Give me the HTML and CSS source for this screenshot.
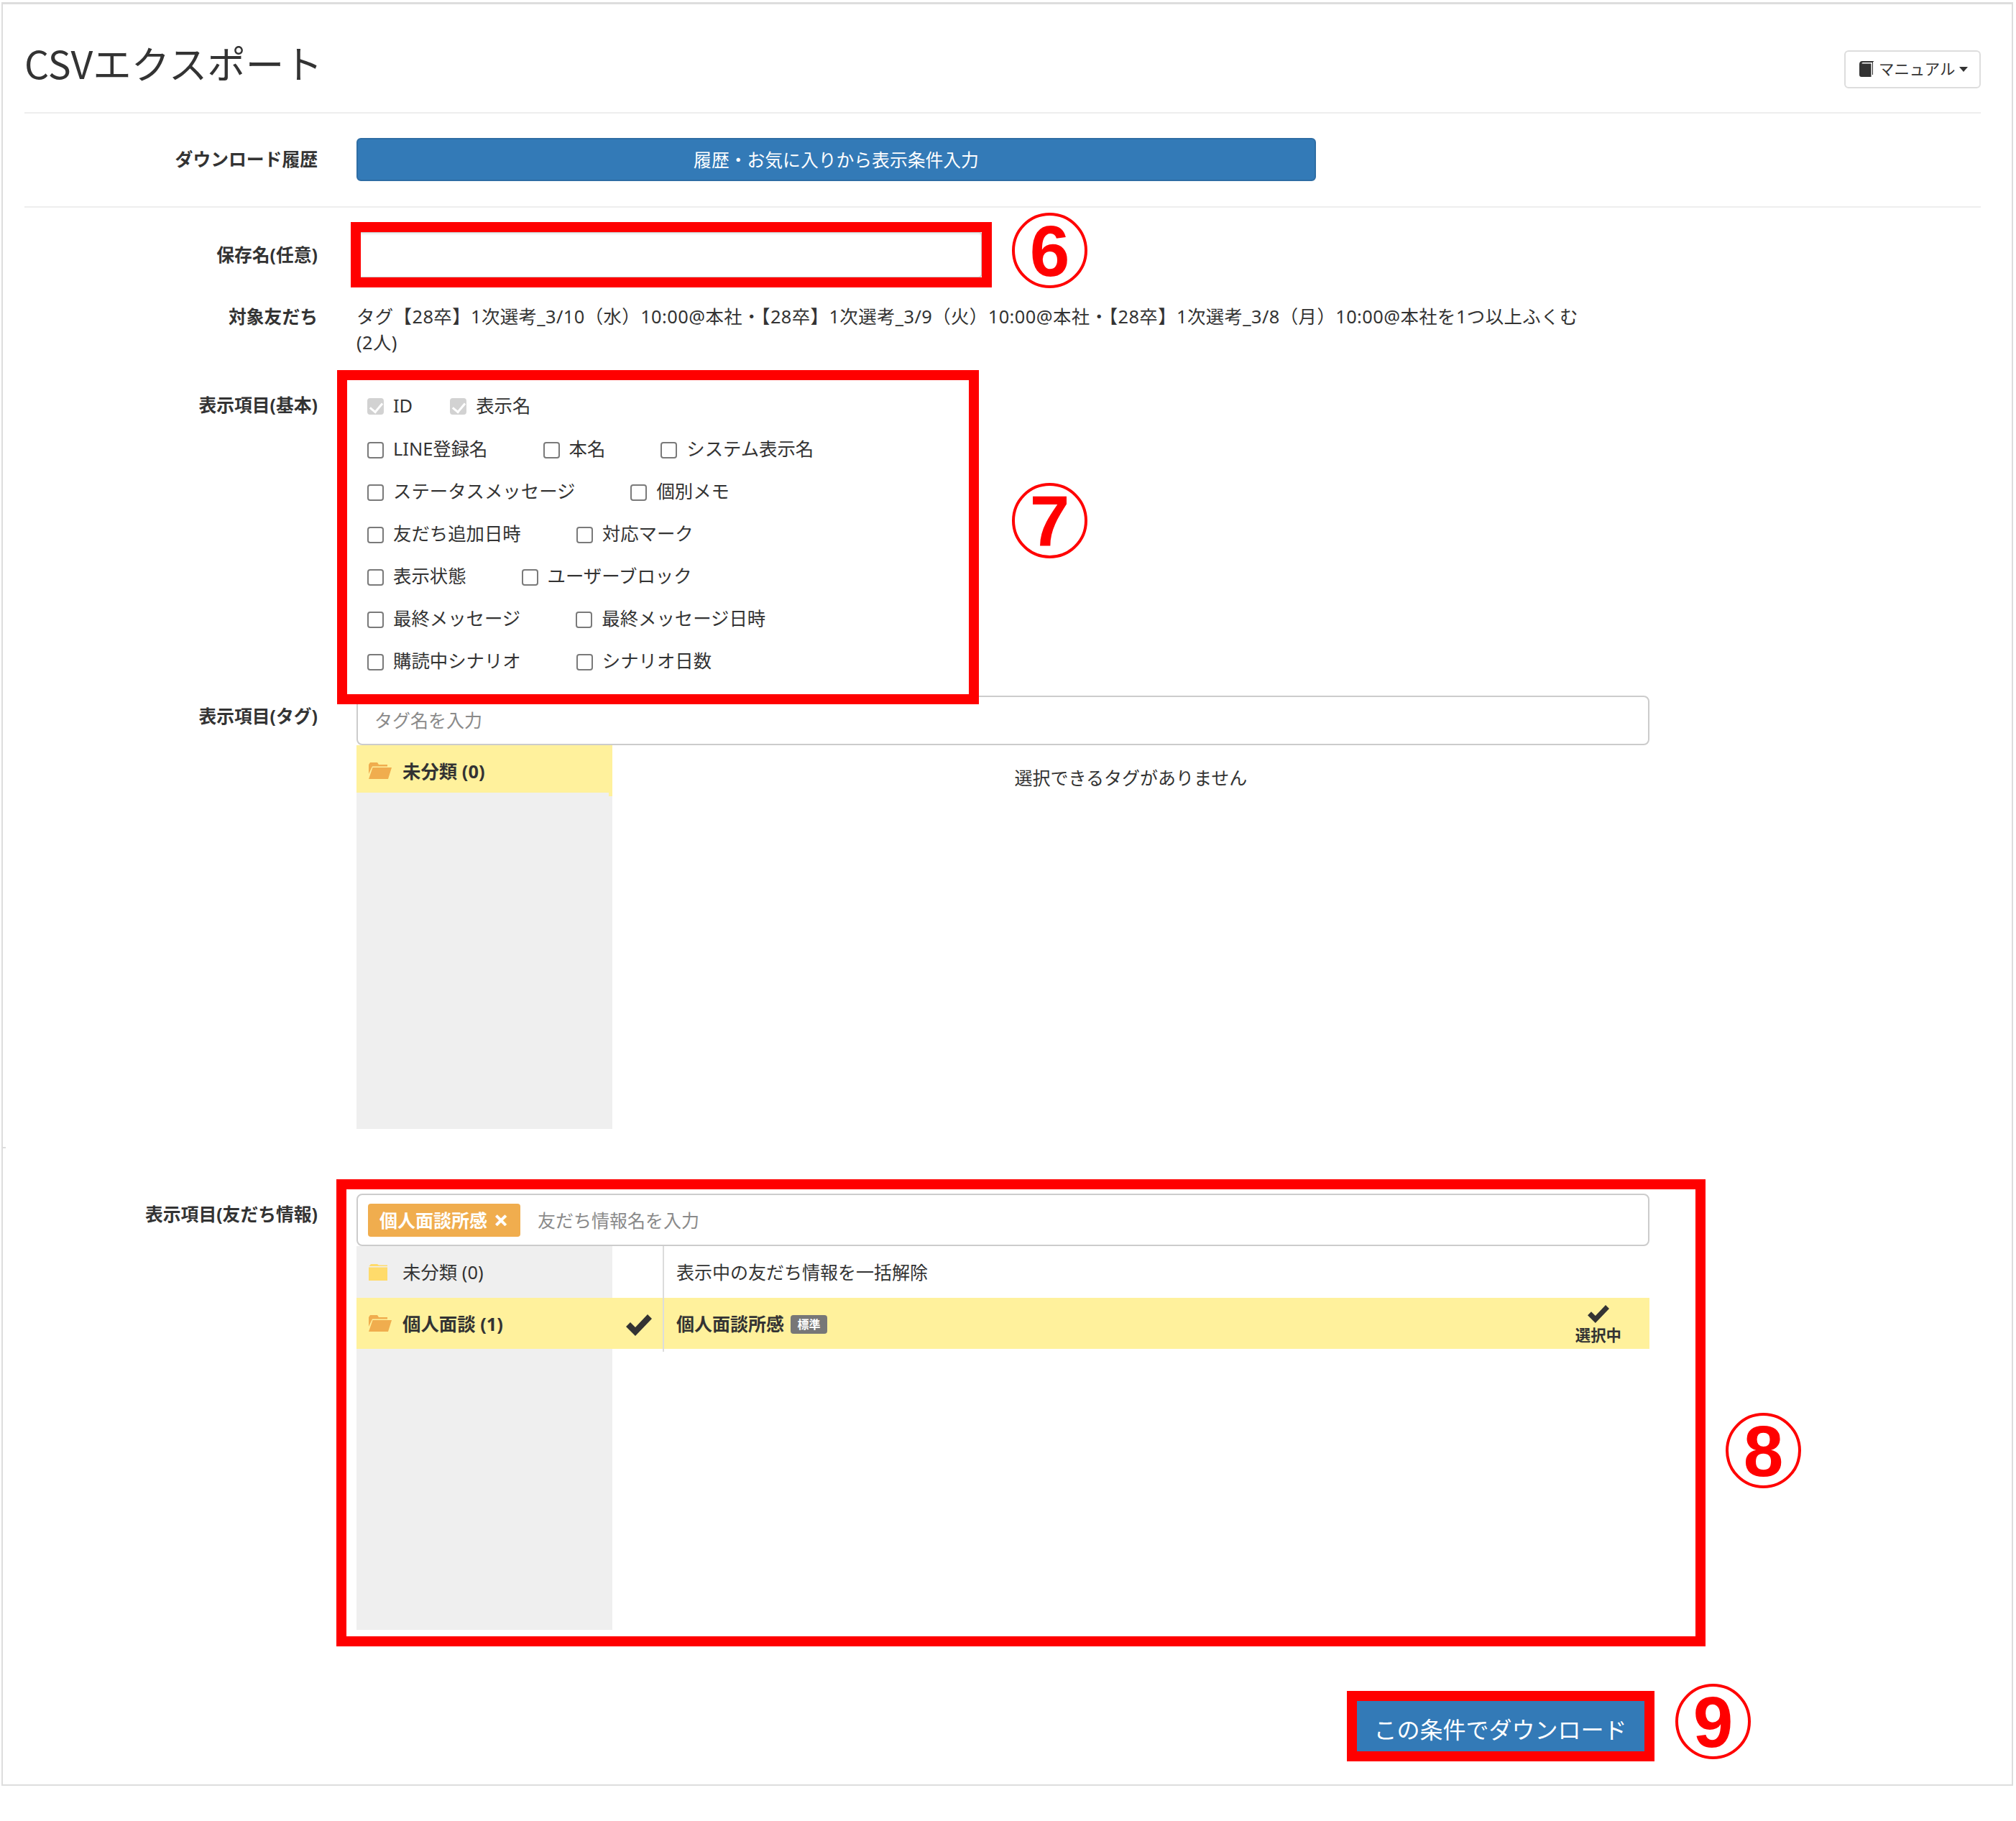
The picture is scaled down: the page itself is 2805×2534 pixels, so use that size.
FILE: index.html
```html
<!DOCTYPE html>
<html lang="ja">
<head>
<meta charset="utf-8">
<title>CSVエクスポート</title>
<link rel="stylesheet" href="styles.css">
</head>
<body>
<main class="panel">
  <header class="page-head">
    <h1 class="page-title">CSVエクスポート</h1>
    <button class="manual-btn" type="button">
      <svg class="book-icon" viewBox="0 0 20 22"><path d="M0 4.5C0 1.5 1.5 0 4 0H20V1H19V19H18V2H5C3.8 2 3.4 3 3.6 3.6H16.5V22H3C1 22 0 20.8 0 19Z"/></svg>
      <span>マニュアル</span>
      <span class="caret"></span>
    </button>
  </header>

  <section class="row row-history">
    <div class="label label-tall">ダウンロード履歴</div>
    <button class="history-btn" type="button">履歴・お気に入りから表示条件入力</button>
  </section>

  <section class="row row-save">
    <div class="label label-save">保存名(任意)</div>
    <input class="save-input" type="text">
  </section>

  <section class="row row-target">
    <div class="label">対象友だち</div>
    <div class="target-text">タグ【28卒】1次選考_3/10（水）10:00@本社・【28卒】1次選考_3/9（火）10:00@本社・【28卒】1次選考_3/8（月）10:00@本社を1つ以上ふくむ<br>(2人)</div>
  </section>

  <section class="row row-basic">
    <div class="label label-basic">表示項目(基本)</div>
    <div class="checks">
      <div class="check-row check-row-first">
        <label class="check"><input type="checkbox" checked disabled>ID</label>
        <label class="check"><input type="checkbox" checked disabled>表示名</label>
      </div>
      <div class="check-row">
        <label class="check"><input type="checkbox">LINE登録名</label>
        <label class="check"><input type="checkbox">本名</label>
        <label class="check"><input type="checkbox">システム表示名</label>
      </div>
      <div class="check-row">
        <label class="check"><input type="checkbox">ステータスメッセージ</label>
        <label class="check"><input type="checkbox">個別メモ</label>
      </div>
      <div class="check-row">
        <label class="check"><input type="checkbox">友だち追加日時</label>
        <label class="check"><input type="checkbox">対応マーク</label>
      </div>
      <div class="check-row">
        <label class="check"><input type="checkbox">表示状態</label>
        <label class="check"><input type="checkbox">ユーザーブロック</label>
      </div>
      <div class="check-row">
        <label class="check"><input type="checkbox">最終メッセージ</label>
        <label class="check"><input type="checkbox">最終メッセージ日時</label>
      </div>
      <div class="check-row">
        <label class="check"><input type="checkbox">購読中シナリオ</label>
        <label class="check"><input type="checkbox">シナリオ日数</label>
      </div>
    </div>
  </section>

  <section class="row row-tag">
    <div class="label label-tag">表示項目(タグ)</div>
    <div class="picker">
      <div class="picker-input picker-input-short"><input type="text" placeholder="タグ名を入力"></div>
      <div class="picker-body">
        <div class="folders">
          <div class="folder folder-on folder-tag">
            <svg class="folder-open" viewBox="0 0 32 23"><path d="M0 16V3L2 0H12L14 3H26V5.500H5Z"/><path d="M5.500 7H32L27 23H0Z"/></svg>
            <span>未分類 (0)</span>
          </div>
        </div>
        <div class="empty-msg">選択できるタグがありません</div>
      </div>
    </div>
  </section>

  <section class="row row-friend">
    <div class="label label-friend">表示項目(友だち情報)</div>
    <div class="picker">
      <div class="picker-input picker-input-tagged">
        <span class="chip">個人面談所感<span class="chip-x">×</span></span>
        <input type="text" placeholder="友だち情報名を入力">
      </div>
      <div class="picker-body">
        <div class="folders">
          <div class="folder">
            <svg class="folder-closed" viewBox="0 0 26 23"><path d="M1 2.500L3 0H12L14 1.500H26V3H0Z"/><path d="M0 4.500H26V23H0Z"/></svg>
            <span>未分類 (0)</span>
          </div>
          <div class="folder folder-on folder-wide">
            <svg class="folder-open" viewBox="0 0 32 23"><path d="M0 16V3L2 0H12L14 3H26V5.500H5Z"/><path d="M5.500 7H32L27 23H0Z"/></svg>
            <span>個人面談 (1)</span>
            <svg class="check-icon" viewBox="0 0 36 30"><path d="M0 17L6 11L13 18L30 0L36 6L13 30Z"/></svg>
          </div>
        </div>
        <div class="values">
          <div class="value">表示中の友だち情報を一括解除</div>
          <div class="value value-on">
            <span>個人面談所感</span><span class="badge">標準</span>
            <span class="selected">
              <svg class="selected-check" viewBox="0 0 36 30"><path d="M0 17L6 11L13 18L30 0L36 6L13 30Z"/></svg>
              <span class="selected-text">選択中</span>
            </span>
          </div>
        </div>
      </div>
    </div>
  </section>

  <div class="submit-row">
    <button class="submit-btn" type="button">この条件でダウンロード</button>
  </div>
</main>

<div class="mark-box mark-box-6"></div>
<div class="mark-num mark-num-6">6</div>
<div class="mark-box mark-box-7"></div>
<div class="mark-num mark-num-7">7</div>
<div class="mark-box mark-box-8"></div>
<div class="mark-num mark-num-8">8</div>
<div class="mark-box mark-box-9"></div>
<div class="mark-num mark-num-9">9</div>
</body>
</html>
```
FILE: styles.css
```css
* { box-sizing: border-box; }
html, body { margin: 0; background: #fff; }
body {
  position: relative;
  min-height: 2534px;
  font-family: "Noto Sans", "Noto Sans CJK JP", sans-serif;
  font-size: 25.400px;
  line-height: 36px;
  color: #333;
}
button, input { font-family: inherit; }

.panel {
  position: relative;
  width: 2799px;
  margin: 3px 0 0 2px;
  padding: 0 43px 40px 30px;
  border: 2px solid #ddd;
  border-top-width: 3px;
}
.panel::before {
  content: "";
  position: absolute;
  left: 0;
  top: 1590px;
  width: 4px;
  height: 2px;
  background: #ddd;
}

.page-head {
  display: flex;
  justify-content: space-between;
  align-items: flex-start;
  height: 152px;
  padding-top: 51px;
  border-bottom: 2px solid #eee;
}
.page-title {
  margin: 0;
  font-family: "Noto Sans CJK JP", sans-serif;
  font-size: 53.500px;
  font-weight: 400;
  line-height: 59px;
}
.manual-btn {
  display: flex;
  align-items: center;
  width: 190px;
  height: 53px;
  margin-top: 13px;
  padding: 0 0 4px 19px;
  background: #fff;
  border: 2px solid #ddd;
  border-radius: 6px;
  color: #333;
  font-size: 21.400px;
  white-space: nowrap;
}
.book-icon { width: 20px; height: 22px; margin: 2px 7px 0 0; fill: #333; }
.caret {
  width: 0;
  height: 0;
  margin: 3px 0 0 6px;
  border-top: 7px solid #333;
  border-left: 6.500px solid transparent;
  border-right: 6.500px solid transparent;
}

.row { display: flex; align-items: flex-start; }
.label {
  flex: none;
  width: 408px;
  margin-right: 54px;
  font-size: 24.800px;
  text-align: right;
  font-weight: 700;
}

.row-history { padding: 34px 0 35px; border-bottom: 2px solid #eee; }
.label-tall { line-height: 58px; }
.history-btn {
  width: 1335px;
  height: 60px;
  padding: 0 0 3px;
  background: #337ab7;
  border: 2px solid #2e6da4;
  border-radius: 6px;
  color: #fff;
  font-size: 24.800px;
}

.row-save { padding-top: 33px; }
.label-save { line-height: 64px; }
.save-input {
  width: 871px;
  height: 65px;
  background: #fff;
  border: 2px solid #ccc;
  border-radius: 6px;
  box-shadow: inset 0 2px 2px rgba(0, 0, 0, .075);
}

.row-target { margin-top: 35px; }
.target-text { letter-spacing: .42px; white-space: nowrap; }

.row-basic { margin-top: 41px; }
.label-basic { padding-top: 10px; }
.check-row { display: flex; align-items: center; height: 59px; padding: 1px 0 0 15px; }
.check-row-first { padding-top: 0; padding-bottom: 2px; }
.check {
  display: flex;
  align-items: center;
  margin-right: 77px;
  white-space: nowrap;
}
.check-row-first .check { margin-right: 52px; }
.check input {
  position: relative;
  appearance: none;
  flex: none;
  width: 23px;
  height: 23px;
  margin: 4px 13px 0 0;
  background: #fff;
  border: 2px solid #7a7a7a;
  border-radius: 4px;
}
.check input:disabled { background: #d2d2d2; border-color: #d2d2d2; }
.check input:checked::after {
  content: "";
  position: absolute;
  left: 5px;
  top: 1px;
  width: 8px;
  height: 14px;
  border-right: 3px solid #fff;
  border-bottom: 3px solid #fff;
  transform: rotate(40deg);
}

.row-tag { margin-top: 20px; }
.label-tag { padding-top: 10px; }
.row-friend { margin-top: 90px; }
.label-friend { padding-top: 10px; }

.picker { width: 1799px; }
.picker-input {
  display: flex;
  align-items: center;
  height: 73px;
  padding-left: 23px;
  background: #fff;
  border: 2px solid #ccc;
  border-radius: 8px;
}
.picker-input-short { height: 69px; padding-bottom: 1px; }
.picker-input input {
  flex: 1;
  min-width: 0;
  padding: 0;
  border: 0;
  outline: 0;
  background: transparent;
  color: #333;
  font-size: 25px;
}
.picker-input input::placeholder { color: #8a8a8a; opacity: 1; }
.picker-input-tagged { padding-left: 14px; }
.chip {
  display: flex;
  align-items: center;
  flex: none;
  width: 212px;
  height: 46px;
  margin-right: 24px;
  padding-left: 16px;
  background: #f0ad4e;
  border-radius: 4px;
  color: #fff;
  font-size: 25px;
  font-weight: 700;
  white-space: nowrap;
}
.chip-x { margin-left: 9px; font-size: 36px; }

.picker-body { display: flex; align-items: flex-start; height: 534px; }
.folders { flex: none; width: 356px; height: 534px; background: #efefef; }
.folder {
  display: flex;
  align-items: center;
  height: 72px;
  padding-left: 17px;
}
.folder span { margin-left: 15px; }
.folder-on { background: #fff19c; font-weight: 700; }
.folder-tag { position: relative; height: 66px; padding-top: 5px; }
.folder-tag::after {
  content: "";
  position: absolute;
  right: 0;
  top: 100%;
  width: 5px;
  height: 5px;
  background: #fff19c;
}
.folder-wide { position: relative; width: 426px; height: 71px; }
.folder-open { flex: none; width: 32px; height: 23px; fill: #f0ad4e; }
.folder-closed { flex: none; width: 26px; height: 23px; margin-right: 6px; fill: #ffdb6b; }
.check-icon { position: absolute; left: 375px; top: 23px; width: 36px; height: 30px; fill: #333; }

.empty-msg { flex: 1; padding-top: 27px; font-size: 25px; text-align: center; }

.values {
  flex: 1;
  margin-left: 70px;
  padding-bottom: 4px;
  border-left: 2px solid #dcdcdc;
  font-size: 25px;
}
.value {
  display: flex;
  align-items: center;
  height: 72px;
  padding-left: 17px;
}
.value-on { height: 71px; background: #fff19c; font-weight: 700; }
.badge {
  display: flex;
  align-items: center;
  justify-content: center;
  width: 51px;
  height: 26px;
  margin: 3px 0 0 9px;
  background: #777;
  border-radius: 4px;
  color: #fff;
  font-size: 16px;
}
.selected {
  display: flex;
  flex-direction: column;
  align-items: center;
  margin: 5px 39px 0 auto;
}
.selected-check { width: 30px; height: 25px; margin-bottom: 2px; fill: #333; }
.selected-text { font-size: 21.400px; line-height: 30px; }

.submit-row { display: flex; justify-content: flex-end; margin: 93px 462px 0 0; }
.submit-btn {
  width: 413px;
  height: 82px;
  padding-top: 6px;
  background: #337ab7;
  border: 2px solid #2e6da4;
  border-radius: 8px;
  color: #fff;
  font-size: 32px;
  white-space: nowrap;
}

.mark-box { position: absolute; border: 14px solid #f00; }
.mark-box-6 { left: 488px; top: 309px; width: 892px; height: 91px; }
.mark-box-7 { left: 469px; top: 515px; width: 893px; height: 465px; }
.mark-box-8 { left: 468px; top: 1641px; width: 1905px; height: 650px; }
.mark-box-9 { left: 1874px; top: 2353px; width: 428px; height: 98px; }

.mark-num {
  position: absolute;
  display: flex;
  align-items: center;
  justify-content: center;
  width: 105px;
  height: 105px;
  background: transparent;
  border: 4px solid #f00;
  border-radius: 50%;
  color: #f00;
  font-family: "Liberation Sans", sans-serif;
  font-size: 100px;
  font-weight: 700;
  line-height: 1;
}
.mark-num-6 { left: 1408px; top: 296px; }
.mark-num-7 { left: 1408px; top: 672px; }
.mark-num-8 { left: 2401px; top: 1966px; }
.mark-num-9 { left: 2331px; top: 2343px; }
```
